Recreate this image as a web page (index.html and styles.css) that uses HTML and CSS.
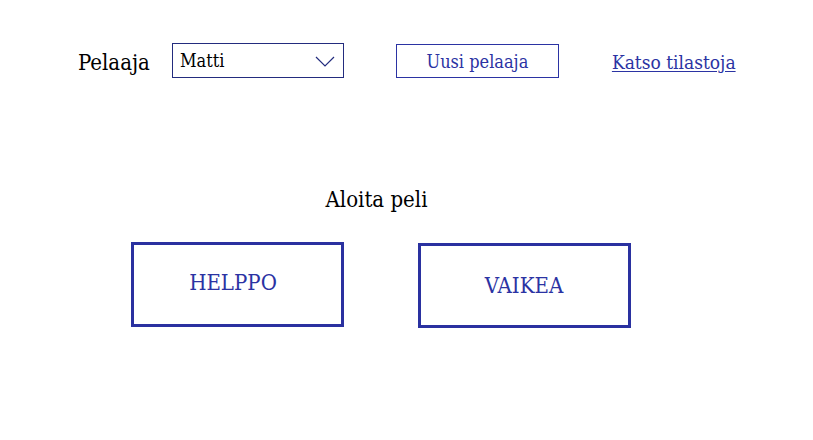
FILE: index.html
```html
<!DOCTYPE html>
<html lang="fi">
<head>
<meta charset="utf-8">
<title>Peli</title>
<link rel="stylesheet" href="styles.css">
</head>
<body>
<div class="page">
  <div class="toolbar">
    <label class="player-label" for="player">Pelaaja</label>
    <div class="select">
      <span class="select-value">Matti</span>
      <svg class="chevron" width="20" height="11" viewBox="0 0 20 11"><path d="M1 1 L10 10 L19 1" fill="none" stroke="#232c7e" stroke-width="1.2"/></svg>
    </div>
    <button class="new-player">Uusi pelaaja</button>
    <a class="stats-link" href="#">Katso tilastoja</a>
  </div>
  <div class="start">
    <h1 class="start-title">Aloita peli</h1>
    <div class="levels">
      <button class="level level-easy">HELPPO</button>
      <button class="level level-hard">VAIKEA</button>
    </div>
  </div>
</div>
</body>
</html>
```
FILE: styles.css
```css
html, body {
  margin: 0;
  padding: 0;
  background: #fff;
}
body {
  font-family: "DejaVu Serif Condensed", "DejaVu Serif", serif;
  color: #000;
}
.page {
  width: 813px;
  height: 440px;
}
.toolbar {
  display: flex;
  align-items: center;
  padding: 43px 0 0 78px;
}
.player-label {
  font-size: 22px;
  margin-right: 22px;
  padding-top: 3px;
}
.select {
  box-sizing: border-box;
  width: 172px;
  height: 35px;
  border: 1px solid #232c7e;
  display: flex;
  align-items: center;
  justify-content: space-between;
  padding: 0 8px 0 7px;
}
.select-value {
  font-size: 18px;
}
.chevron {
  display: block;
  margin-top: 2px;
}
.new-player {
  box-sizing: border-box;
  width: 163px;
  height: 34px;
  margin-left: 52px;
  border: 1px solid #2b33a3;
  background: #fff;
  color: #2b33a3;
  font-family: inherit;
  font-size: 18px;
  padding: 2px 0 0;
}
.stats-link {
  margin-left: 53px;
  margin-top: 3px;
  color: #2b33a3;
  font-size: 19px;
  text-decoration: underline;
  text-underline-offset: 2px;
}
.start {
  display: flex;
  flex-direction: column;
  align-items: center;
  margin-top: 109px;
  padding-right: 60px;
}
.start-title {
  margin: 0;
  font-weight: normal;
  font-size: 22px;
  line-height: 26px;
}
.levels {
  display: flex;
  gap: 74px;
  margin-top: 29px;
  padding-left: 8px;
}
.level {
  box-sizing: border-box;
  width: 213px;
  height: 85px;
  border: 3px solid #2a31a0;
  background: #fff;
  color: #2b33a3;
  font-family: inherit;
  font-size: 22px;
  padding: 0;
}
.level-easy {
  padding: 0 8px 4px 0;
}
.level-hard {
  margin-top: 1px;
}
```
